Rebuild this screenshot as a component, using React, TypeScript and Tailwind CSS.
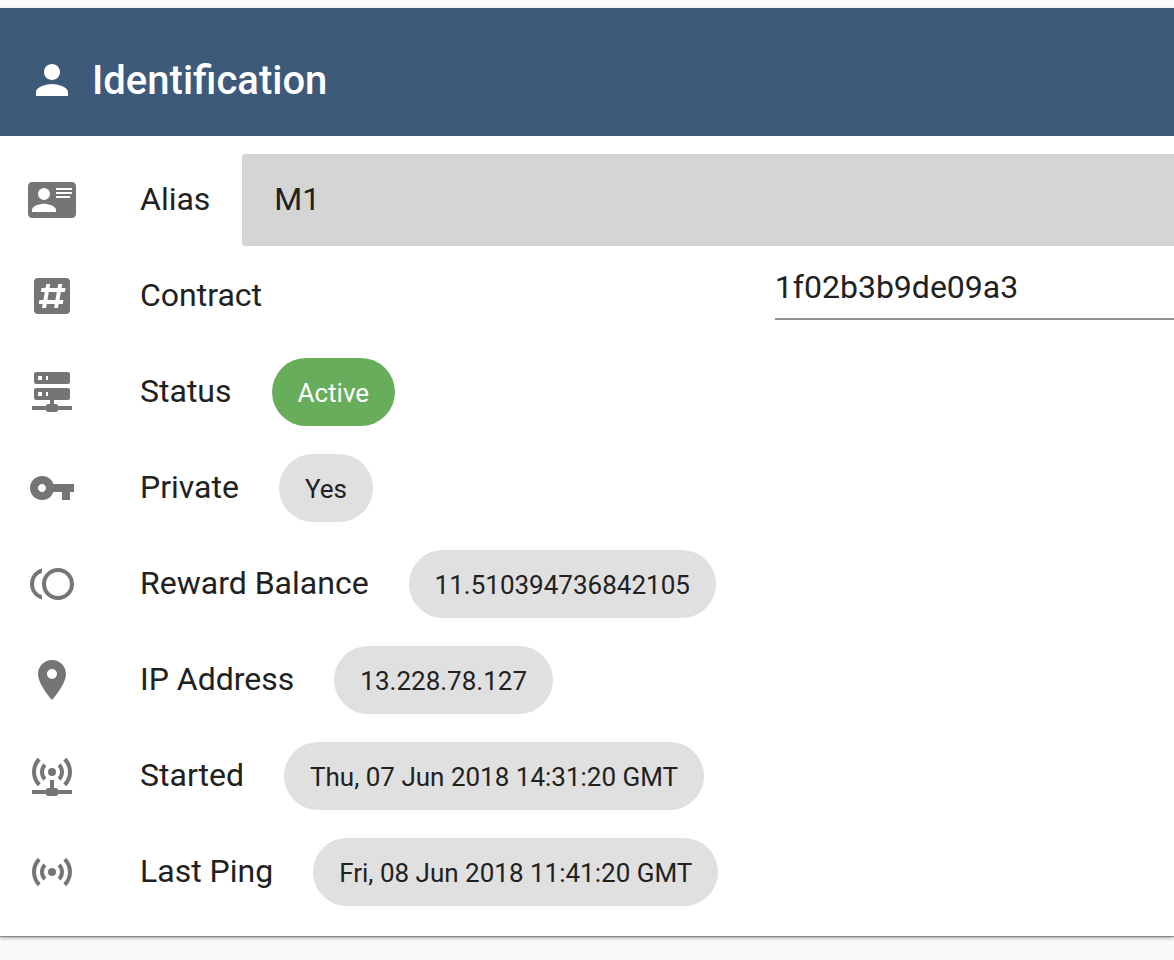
import React from 'react'
import type { IconType } from 'react-icons'
import { MdPerson, MdPlace, MdToll, MdVpnKey } from 'react-icons/md'

interface IconProps {
  className?: string
}

interface InfoRow {
  label: string
  value: string
  icon: IconType | React.FC<IconProps>
  tone: 'neutral' | 'success'
}

const CHIP_STYLES: Record<InfoRow['tone'], string> = {
  neutral: 'bg-[#e0e0e0] text-[#212121]',
  success: 'bg-[#67ad5b] text-white',
}

const CardDetailsIcon: React.FC<IconProps> = ({ className }) => (
  <svg viewBox="0 0 24 24" fill="currentColor" className={className} aria-hidden="true">
    <path d="M2,3H22C23.05,3 24,3.95 24,5V19C24,20.05 23.05,21 22,21H2C0.95,21 0,20.05 0,19V5C0,3.95 0.95,3 2,3M14,6V7H22V6H14M14,8V9H21.5L22,9V8H14M14,10V11H21V10H14M8,13.91C6,13.91 2,15 2,17V18H14V17C14,15 10,13.91 8,13.91M8,6A3,3 0 0,0 5,9A3,3 0 0,0 8,12A3,3 0 0,0 11,9A3,3 0 0,0 8,6Z" />
  </svg>
)

const PoundBoxIcon: React.FC<IconProps> = ({ className }) => (
  <svg viewBox="0 0 24 24" fill="currentColor" className={className} aria-hidden="true">
    <path d="M3,5A2,2 0 0,1 5,3H19A2,2 0 0,1 21,5V19A2,2 0 0,1 19,21H5A2,2 0 0,1 3,19V5M7,18H9L9.35,16H13.35L13,18H15L15.35,16H17.35L17.71,14H15.71L16.41,10H18.41L18.76,8H16.76L17.12,6H15.12L14.76,8H10.76L11.12,6H9.12L8.76,8H6.76L6.41,10H8.41L7.71,14H5.71L5.35,16H7.35L7,18M10.41,10H14.41L13.71,14H9.71L10.41,10Z" />
  </svg>
)

const ServerNetworkIcon: React.FC<IconProps> = ({ className }) => (
  <svg viewBox="0 0 24 24" fill="currentColor" className={className} aria-hidden="true">
    <path d="M13,18H14A1,1 0 0,1 15,19H22V21H15A1,1 0 0,1 14,22H10A1,1 0 0,1 9,21H2V19H9A1,1 0 0,1 10,18H11V16H4A1,1 0 0,1 3,15V11A1,1 0 0,1 4,10H20A1,1 0 0,1 21,11V15A1,1 0 0,1 20,16H13V18M4,2H20A1,1 0 0,1 21,3V7A1,1 0 0,1 20,8H4A1,1 0 0,1 3,7V3A1,1 0 0,1 4,2M9,6H10V4H9V6M9,14H10V12H9V14M5,4V6H7V4H5M5,12V14H7V12H5Z" />
  </svg>
)

const AccessPointIcon: React.FC<IconProps> = ({ className }) => (
  <svg viewBox="0 0 24 24" fill="currentColor" className={className} aria-hidden="true">
    <path d="M4.93,4.93C3.12,6.74 2,9.24 2,12C2,14.76 3.12,17.26 4.93,19.07L6.34,17.66C4.89,16.22 4,14.22 4,12C4,9.79 4.89,7.78 6.34,6.34L4.93,4.93M19.07,4.93L17.66,6.34C19.11,7.78 20,9.79 20,12C20,14.22 19.11,16.22 17.66,17.66L19.07,19.07C20.88,17.26 22,14.76 22,12C22,9.24 20.88,6.74 19.07,4.93M7.76,7.76C6.67,8.85 6,10.35 6,12C6,13.65 6.67,15.15 7.76,16.24L9.17,14.83C8.45,14.11 8,13.11 8,12C8,10.89 8.45,9.89 9.17,9.17L7.76,7.76M16.24,7.76L14.83,9.17C15.55,9.89 16,10.89 16,12C16,13.11 15.55,14.11 14.83,14.83L16.24,16.24C17.33,15.15 18,13.65 18,12C18,10.35 17.33,8.85 16.24,7.76M12,10A2,2 0 0,0 10,12A2,2 0 0,0 12,14A2,2 0 0,0 14,12A2,2 0 0,0 12,10Z" />
  </svg>
)

const AccessPointNetworkIcon: React.FC<IconProps> = ({ className }) => (
  <svg viewBox="0 0 24 24" fill="currentColor" className={className} aria-hidden="true">
    <path d="M4.93,2.93C3.12,4.74 2,7.24 2,10C2,12.76 3.12,15.26 4.93,17.07L6.34,15.66C4.89,14.22 4,12.22 4,10C4,7.79 4.89,5.78 6.34,4.34L4.93,2.93M19.07,2.93L17.66,4.34C19.11,5.78 20,7.79 20,10C20,12.22 19.11,14.22 17.66,15.66L19.07,17.07C20.88,15.26 22,12.76 22,10C22,7.24 20.88,4.74 19.07,2.93M7.76,5.76C6.67,6.85 6,8.35 6,10C6,11.65 6.67,13.15 7.76,14.24L9.17,12.83C8.45,12.11 8,11.11 8,10C8,8.89 8.45,7.89 9.17,7.17L7.76,5.76M16.24,5.76L14.83,7.17C15.55,7.89 16,8.89 16,10C16,11.11 15.55,12.11 14.83,12.83L16.24,14.24C17.33,13.15 18,11.65 18,10C18,8.35 17.33,6.85 16.24,5.76M12,8A2,2 0 0,0 10,10A2,2 0 0,0 12,12A2,2 0 0,0 14,10A2,2 0 0,0 12,8M11,14V18H10A1,1 0 0,0 9,19H2V21H9A1,1 0 0,0 10,22H14A1,1 0 0,0 15,21H22V19H15A1,1 0 0,0 14,18H13V14H11Z" />
  </svg>
)

const ROWS: InfoRow[] = [
  { label: 'Status',         value: 'Active',                        icon: ServerNetworkIcon,      tone: 'success' },
  { label: 'Private',        value: 'Yes',                           icon: MdVpnKey,               tone: 'neutral' },
  { label: 'Reward Balance', value: '11.510394736842105',            icon: MdToll,                 tone: 'neutral' },
  { label: 'IP Address',     value: '13.228.78.127',                 icon: MdPlace,                tone: 'neutral' },
  { label: 'Started',        value: 'Thu, 07 Jun 2018 14:31:20 GMT', icon: AccessPointNetworkIcon, tone: 'neutral' },
  { label: 'Last Ping',      value: 'Fri, 08 Jun 2018 11:41:20 GMT', icon: AccessPointIcon,        tone: 'neutral' },
]

const ICON_CLASS = 'ml-7 size-12 shrink-0 text-[#757575]'
const LABEL_CLASS = 'ml-16 shrink-0 pb-0.5'

const App: React.FC = () => {
  return (
    <main className="min-h-screen bg-[#fafafa] pt-2 font-['Roboto',sans-serif] text-[32px] leading-10 text-[#212121]">
      <section className="bg-white shadow-[0_1px_1px_rgba(0,0,0,0.3),0_2px_4px_rgba(0,0,0,0.3)]">
        <header className="flex h-32 items-center gap-4 bg-[#3e5a7a] px-7 pt-4 text-white">
          <MdPerson className="size-12 shrink-0" aria-hidden="true" />
          <h1 className="pt-0.5 text-[40px] leading-12 font-medium">Identification</h1>
        </header>

        <div className="py-4">
          <div className="flex h-24 items-center">
            <CardDetailsIcon className={ICON_CLASS} />
            <label htmlFor="alias" className={LABEL_CLASS}>Alias</label>
            <input
              id="alias"
              type="text"
              defaultValue="M1"
              className="ml-8 h-[92px] min-w-0 flex-1 rounded-l-sm bg-[#d5d5d5] px-8 pb-0.5 outline-none"
            />
          </div>

          <div className="flex h-24 items-center">
            <PoundBoxIcon className={ICON_CLASS} />
            <label htmlFor="contract" className={LABEL_CLASS}>Contract</label>
            <input
              id="contract"
              type="text"
              defaultValue="1f02b3b9de09a3"
              className="ml-auto h-[72px] w-[34%] min-w-0 self-start border-b-2 border-[#949494] bg-transparent pt-2 outline-none"
            />
          </div>

          <dl>
            {ROWS.map(row => {
              const Icon = row.icon
              return (
                <div key={row.label} className="flex h-24 items-center">
                  <Icon className={ICON_CLASS} />
                  <dt className={LABEL_CLASS}>{row.label}</dt>
                  <dd className={`ml-10 flex h-[68px] items-center rounded-full px-[26px] pt-0.5 text-[26px] whitespace-nowrap ${CHIP_STYLES[row.tone]}`}>
                    {row.value}
                  </dd>
                </div>
              )
            })}
          </dl>
        </div>
      </section>
    </main>
  )
}

export default App
